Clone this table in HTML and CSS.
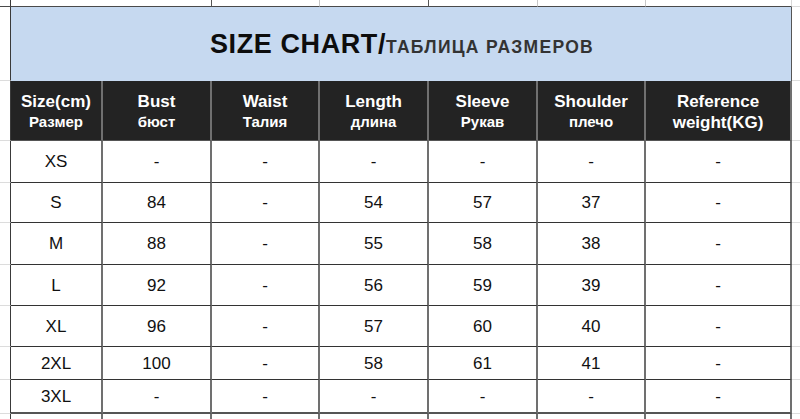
FILE: index.html
```html
<!DOCTYPE html>
<html lang="en">
<head>
<meta charset="utf-8">
<title>Size chart</title>
<link rel="stylesheet" href="styles.css">
</head>
<body>
<div class="sheet">
  <!-- top strip -->
  <div class="m ml strip"></div>
  <div class="c strip span2 dark-r"></div>
  <div class="c strip"></div>
  <div class="c strip dark-r"></div>
  <div class="c strip"></div>
  <div class="c strip"></div>
  <div class="c strip light-r"></div>
  <div class="m mr strip"></div>

  <!-- banner -->
  <div class="m ml"></div>
  <div class="banner"><span class="t-main">SIZE CHART/</span><span class="t-sub">ТАБЛИЦА РАЗМЕРОВ</span></div>
  <div class="m mr"></div>

  <!-- header -->
  <div class="m ml"></div>
  <div class="c h"><span class="h1">Size(cm)</span><span class="h2">Размер</span></div>
  <div class="c h"><span class="h1">Bust</span><span class="h2">бюст</span></div>
  <div class="c h"><span class="h1">Waist</span><span class="h2">Талия</span></div>
  <div class="c h"><span class="h1">Length</span><span class="h2">длина</span></div>
  <div class="c h"><span class="h1">Sleeve</span><span class="h2">Рукав</span></div>
  <div class="c h"><span class="h1">Shoulder</span><span class="h2">плечо</span></div>
  <div class="c h"><span class="h1 wrap">Reference weight(KG)</span></div>
  <div class="m mr"></div>

  <!-- XS -->
  <div class="m ml"></div>
  <div class="c">XS</div><div class="c">-</div><div class="c">-</div><div class="c">-</div><div class="c">-</div><div class="c">-</div><div class="c">-</div>
  <div class="m mr"></div>

  <!-- S -->
  <div class="m ml"></div>
  <div class="c">S</div><div class="c">84</div><div class="c">-</div><div class="c">54</div><div class="c">57</div><div class="c">37</div><div class="c">-</div>
  <div class="m mr"></div>

  <!-- M -->
  <div class="m ml"></div>
  <div class="c">M</div><div class="c">88</div><div class="c">-</div><div class="c">55</div><div class="c">58</div><div class="c">38</div><div class="c">-</div>
  <div class="m mr"></div>

  <!-- L -->
  <div class="m ml"></div>
  <div class="c">L</div><div class="c">92</div><div class="c">-</div><div class="c">56</div><div class="c">59</div><div class="c">39</div><div class="c">-</div>
  <div class="m mr"></div>

  <!-- XL -->
  <div class="m ml"></div>
  <div class="c">XL</div><div class="c">96</div><div class="c">-</div><div class="c">57</div><div class="c">60</div><div class="c">40</div><div class="c">-</div>
  <div class="m mr"></div>

  <!-- 2XL -->
  <div class="m ml"></div>
  <div class="c">2XL</div><div class="c">100</div><div class="c">-</div><div class="c">58</div><div class="c">61</div><div class="c">41</div><div class="c">-</div>
  <div class="m mr"></div>

  <!-- 3XL -->
  <div class="m ml"></div>
  <div class="c thick">3XL</div><div class="c thick">-</div><div class="c thick">-</div><div class="c thick">-</div><div class="c thick">-</div><div class="c thick">-</div><div class="c thick">-</div>
  <div class="m mr"></div>

  <!-- next row (cut off) -->
  <div class="m ml last"></div>
  <div class="c last"></div><div class="c last"></div><div class="c last"></div><div class="c last"></div><div class="c last"></div><div class="c last"></div><div class="c last"></div>
  <div class="m mr last"></div>
</div>
</body>
</html>
```

FILE: styles.css
```css
* {
  box-sizing: border-box;
}

html, body {
  margin: 0;
  padding: 0;
  background: #ffffff;
}

body {
  width: 800px;
  height: 419px;
  overflow: hidden;
  font-family: "Liberation Sans", Arial, sans-serif;
  color: #111111;
}

.sheet {
  display: grid;
  grid-template-columns: 11px 92px 109px 108px 109px 109px 108px 146px 1fr;
  grid-template-rows: 7px 74px 60px 42px 40px 42px 41px 41px 33px 34px 20px;
}

/* margin (spreadsheet gutter) cells */
.m {
  border-bottom: 1px solid #dcdcdc;
}

.ml {
  border-right: 1px solid #3a3a3a;
}

.mr {
  border-bottom-color: #dedede;
}

/* table cells */
.c {
  display: flex;
  align-items: center;
  justify-content: center;
  font-size: 17px;
  line-height: 20px;
  border-right: 2px solid #707070;
  border-bottom: 1px solid #333333;
  padding-top: 1px;
}

.c.thick {
  border-bottom: 2px solid #555555;
}

.strip {
  border-bottom: 1px solid #4a4a4a;
}

.c.strip {
  border-right: 1px solid #c8c8c8;
}

.c.strip.dark-r {
  border-right: 1px solid #555555;
}

.c.strip.light-r {
  border-right: 1px solid #d8d8d8;
}

.m.strip {
  border-bottom-color: #dcdcdc;
}

.m.ml.strip {
  border-bottom-color: #4a4a4a;
}

.span2 {
  grid-column: span 2;
}

.banner {
  grid-column: span 7;
  background: #c6d9f0;
  border-right: 1px solid #555555;
  display: flex;
  align-items: baseline;
  justify-content: center;
  padding-top: 22px;
  padding-left: 2px;
  color: #111111;
  font-weight: bold;
}

.t-main {
  font-size: 27px;
  line-height: 30px;
  letter-spacing: 0.6px;
  color: #0d0d0d;
}

.t-sub {
  font-size: 17.5px;
  letter-spacing: 1.3px;
  color: #333333;
}

.h {
  background: #232323;
  color: #ffffff;
  font-weight: bold;
  flex-direction: column;
  border-bottom: 1px solid #555555;
  padding-top: 3px;
}

.h1 {
  font-size: 17px;
  line-height: 20px;
}

.h2 {
  font-size: 15px;
  line-height: 20px;
}

.h1.wrap {
  width: 110px;
  text-align: center;
  line-height: 21px;
}

.last {
  border-bottom: none;
}

.m.last {
  border-bottom: none;
}
```
